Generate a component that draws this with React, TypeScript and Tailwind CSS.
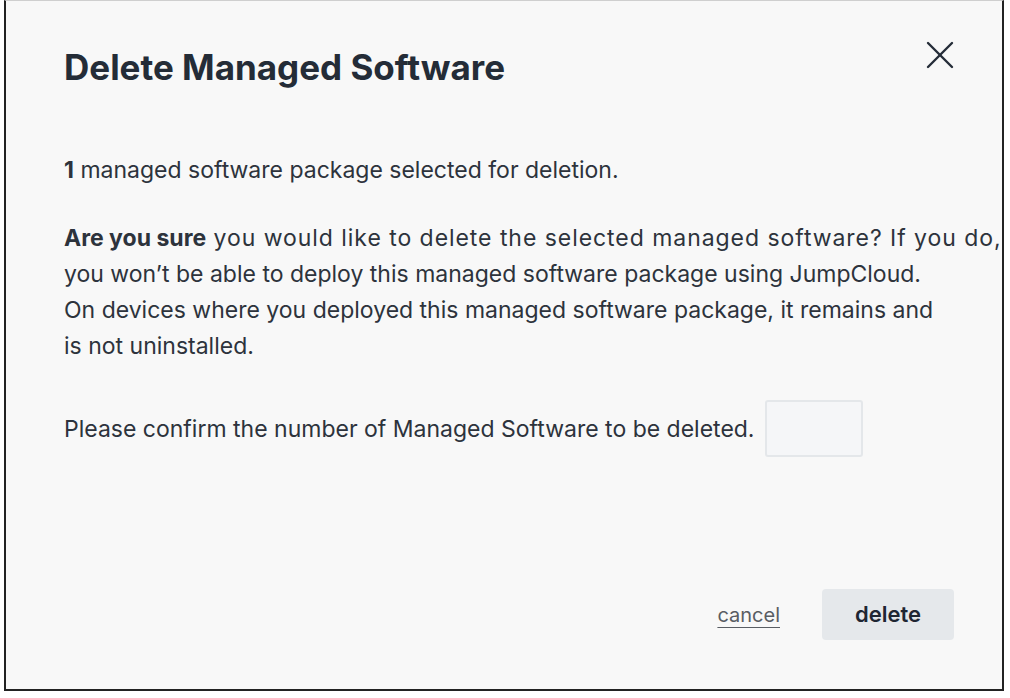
export default function App() {
  return (
    <div className="w-[1010px] h-[698px] bg-white" style={{ fontFamily: "Inter, 'Noto Sans', sans-serif" }}>
      <div className="ml-[4px] w-[1000px] h-[691px] bg-[#f8f8f8] border-l-2 border-r-2 border-b-2 border-t border-l-[#222] border-r-[#222] border-b-[#222] border-t-[#cfcfcf] flex flex-col">
        {/* Header */}
        <div className="flex items-start justify-between pl-[58px] pr-[48px] pt-[42px]">
          <h1 className="text-[35px] leading-[48px] font-bold text-[#242c37]">Delete Managed Software</h1>
          <button className="mt-[-2px] text-[#252d38]">
            <svg width="28" height="28" viewBox="0 0 28 28" fill="none" stroke="currentColor" strokeWidth="2.4" strokeLinecap="round">
              <path d="M2 2 26 26" />
              <path d="M26 2 2 26" />
            </svg>
          </button>
        </div>

        {/* Body */}
        <div className="pl-[58px] pr-[2px] pt-[61px] text-[23px] leading-[36px] text-[#2d333c]">
          <p>
            <span className="font-bold">1</span> managed software package selected for deletion.
          </p>
          <p className="mt-[32px] whitespace-nowrap">
            <span className="font-bold">Are you sure</span>
            <span className="tracking-[0.95px]"> you would like to delete the selected managed software? If you do,</span>
            <br />
            you won’t be able to deploy this managed software package using JumpCloud.
            <br />
            On devices where you deployed this managed software package, it remains and
            <br />
            is not uninstalled.
          </p>
          <div className="mt-[36px] flex items-center gap-[10px]">
            <span>Please confirm the number of Managed Software to be deleted.</span>
            <input
              type="text"
              className="w-[98px] h-[57px] bg-[#f5f6f8] border-2 border-[#e4e7ea] rounded-[3px] outline-none"
            />
          </div>
        </div>

        {/* Footer */}
        <div className="mt-auto flex items-center justify-end gap-[42px] pr-[48px] pb-[49px]">
          <a className="text-[20px] text-[#595d63] underline underline-offset-[5px] decoration-1">cancel</a>
          <button className="w-[132px] h-[51px] bg-[#e5e8eb] rounded-[4px] text-[22px] font-semibold text-[#1f2633]">
            delete
          </button>
        </div>
      </div>
    </div>
  );
}
